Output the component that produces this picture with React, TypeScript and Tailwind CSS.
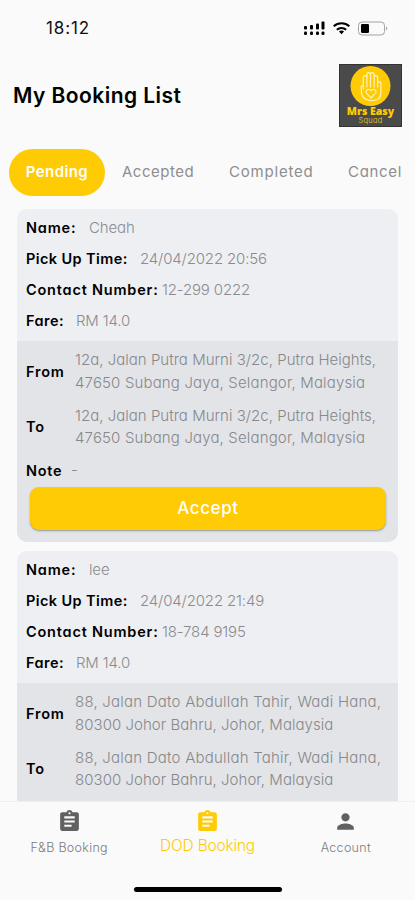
import React from "react";
import { MdAssignment, MdPerson } from "react-icons/md";

type Line = { text: string; style: string };

type Booking = {
  name: string;
  time: string;
  contact: string;
  fare: string;
  address: Line[];
  note?: string;
};

const tabs = [
  { title: "Accepted", style: "ml-[17px] w-[107px] tracking-[0.5px]" },
  { title: "Completed", style: "w-[119px] tracking-[0.8px]" },
  { title: "Cancel", style: "tracking-[0.7px]" },
];

const bookings: Booking[] = [
  {
    name: "Cheah",
    time: "24/04/2022 20:56",
    contact: "12-299 0222",
    fare: "RM 14.0",
    address: [
      { text: "12a, Jalan Putra Murni 3/2c, Putra Heights,", style: "tracking-[0.02px]" },
      { text: "47650 Subang Jaya, Selangor, Malaysia", style: "tracking-[0.15px]" },
    ],
    note: "-",
  },
  {
    name: "lee",
    time: "24/04/2022 21:49",
    contact: "18-784 9195",
    fare: "RM 14.0",
    address: [
      { text: "88, Jalan Dato Abdullah Tahir, Wadi Hana,", style: "tracking-[0.22px]" },
      { text: "80300 Johor Bahru, Johor, Malaysia", style: "tracking-[0.04px]" },
    ],
  },
];

const navItems = [
  { title: "F&B Booking", icon: MdAssignment, active: false },
  { title: "DOD Booking", icon: MdAssignment, active: true },
  { title: "Account", icon: MdPerson, active: false },
];

const StatusBar = () => (
  <div className="flex h-14 shrink-0 items-center justify-between pr-[27px] pl-[46px]">
    <span className="pt-0.5 text-[17px] tracking-[0.9px] text-[#111]">18:12</span>
    <svg width="85" height="18" viewBox="0 0 85 18" fill="none">
      <g fill="#000">
        <rect x="1" y="7" width="3" height="3.5" rx="1" />
        <rect x="7" y="6" width="3" height="4.5" rx="1" />
        <rect x="13" y="4.5" width="3" height="6" rx="1" />
        <rect x="18.5" y="2.5" width="3" height="8" rx="1" />
        <rect x="1" y="12.5" width="3" height="3.5" rx="1.2" />
        <rect x="7" y="12.5" width="3" height="3.5" rx="1.2" />
        <rect x="13" y="12.5" width="3" height="3.5" rx="1.2" />
        <rect x="18.5" y="12.5" width="3" height="3.5" rx="1.2" />
      </g>
      <g stroke="#000" strokeWidth="2">
        <path d="M30.7 7.3a11.5 11.5 0 0 1 15.6 0" />
        <path d="M33.8 10.7a7 7 0 0 1 9.4 0" />
      </g>
      <path d="M38.5 15.2l-2.5-2.6a3.7 3.7 0 0 1 5 0z" fill="#000" />
      <rect x="55.5" y="3" width="26" height="13" rx="3.5" stroke="#a3a3a3" />
      <rect x="58" y="5" width="8" height="9" rx="1.2" fill="#000" />
      <path d="M83 7.5v4c1.6-.6 1.6-3.4 0-4z" fill="#a3a3a3" />
    </svg>
  </div>
);

const Logo = () => (
  <div className="flex h-[63px] w-[63px] flex-col items-center border border-[#333] bg-[#4a4a4a] pt-px text-[#ffcb05]">
    <svg width="41" height="40" viewBox="0 0 41 40" fill="none" className="shrink-0">
      <circle cx="20.5" cy="20" r="20" fill="#ffcb05" />
      <g stroke="#fff3c0" strokeWidth="1.2" strokeLinecap="round" strokeLinejoin="round">
        <path d="M13.3 23V11.5a1.8 1.8 0 0 1 3.6 0V21V8.500a1.800 1.800 0 0 1 3.600 0V21V8.500a1.800 1.800 0 0 1 3.600 0V21v-9.500a1.800 1.800 0 0 1 3.600 0V21v-3.500a1.600 1.600 0 0 1 3.200 0V27c0 5-3.500 7.500-8.800 7.500s-9.500-2.500-10.500-6.500l-.5-7c0-1.800 2.200-1.800 2.200 0V23" />
        <path d="M21 32l-4.500-4.800c-1.800-2.800 2.200-5.400 4.500-2.600 2.300-2.800 6.300-.2 4.500 2.600z" />
      </g>
    </svg>
    <span className="font-['Open_Sans'] text-[10.5px] leading-[11px] font-extrabold whitespace-nowrap">Mrs Easy</span>
    <span className="text-[7.5px] leading-[8px] tracking-[0.2px] text-[#dcb52a]">Squad</span>
  </div>
);

const Row = ({ label, value, width }: { label: string; value: string; width: string }) => (
  <div className="flex h-[31px] items-center whitespace-nowrap">
    <span className={`shrink-0 text-[14.5px] font-semibold text-black ${width}`}>{label}</span>
    <span className="text-[15px] font-light tracking-[-0.15px] text-[#8c8c8f]">{value}</span>
  </div>
);

const Address = ({ label, lines }: { label: string; lines: Line[] }) => (
  <div className="flex h-[55.5px] items-center">
    <span className="w-[49px] shrink-0 text-[14.5px] font-semibold tracking-[0.8px] text-black">{label}</span>
    <div className="text-[15px] leading-[22.5px] font-light whitespace-nowrap text-[#88888b]">
      {lines.map((line) => (
        <p key={line.text} className={line.style}>
          {line.text}
        </p>
      ))}
    </div>
  </div>
);

const BookingCard = ({ booking }: { booking: Booking }) => (
  <div className="flex shrink-0 flex-col overflow-hidden rounded-[10px] bg-[#edeff3] last:grow last:rounded-b-none">
    <div className="h-[131.5px] px-[9px] pt-[3.5px]">
      <Row label="Name:" value={booking.name} width="w-[63px] tracking-[0.8px]" />
      <Row label="Pick Up Time:" value={booking.time} width="w-[114px] tracking-[0.4px]" />
      <Row label="Contact Number:" value={booking.contact} width="w-[136px] tracking-[0.8px]" />
      <Row label="Fare:" value={booking.fare} width="w-[50px] tracking-[0.5px]" />
    </div>
    <div className="grow bg-[#e2e4e8] px-[9px] pt-[3.5px]">
      <Address label="From" lines={booking.address} />
      <Address label="To" lines={booking.address} />
      {booking.note && (
        <>
          <Row label="Note" value={booking.note} width="w-[45px] tracking-[0.7px]" />
          <div className="px-1 pt-[0.5px] pb-3">
            <button className="h-[43px] w-[356px] rounded-[9px] bg-[#ffcb05] pt-0.5 text-[17px] font-medium tracking-[0.6px] text-white shadow-[0_1px_2px_rgba(0,0,0,0.35)]">
              Accept
            </button>
          </div>
        </>
      )}
    </div>
  </div>
);

const App = () => {
  return (
    <div className="flex h-[900px] w-[415px] flex-col overflow-hidden bg-[#fafafa] font-[Inter,sans-serif] [font-feature-settings:'cv11']">
      <StatusBar />
      <header className="flex h-[79px] shrink-0 items-center justify-between px-[13px]">
        <h1 className="text-[21px] font-semibold tracking-[0.45px] text-black">My Booking List</h1>
        <Logo />
      </header>
      <div className="flex h-[74px] shrink-0 items-center overflow-hidden pl-[9px] text-[15px] text-[#8e8e8e]">
        <button className="flex h-[47px] w-24 shrink-0 items-center justify-center rounded-full bg-[#ffcb05] font-semibold tracking-[0.4px] text-white">
          Pending
        </button>
        {tabs.map((tab) => (
          <button key={tab.title} className={`shrink-0 text-left ${tab.style}`}>
            {tab.title}
          </button>
        ))}
      </div>
      <main className="flex min-h-0 flex-1 flex-col gap-[9.5px] overflow-hidden px-[17px]">
        {bookings.map((booking) => (
          <BookingCard key={booking.name} booking={booking} />
        ))}
      </main>
      <nav className="flex h-[99px] shrink-0 flex-col items-center justify-between border-t border-[#f0f0f0] pb-2">
        <div className="grid w-full grid-cols-3">
          {navItems.map((item) => (
            <div
              key={item.title}
              className={`flex flex-col items-center pt-[7px] font-light ${item.active ? "text-[#ffcb05]" : "text-[#616161]"}`}
            >
              {React.createElement(item.icon, { size: 25 })}
              <span
                className={
                  item.active
                    ? "text-[15.5px] leading-6 tracking-[-0.2px]"
                    : "mt-0.5 text-[12.5px] leading-6 tracking-[0.3px] text-[#7a7a7a]"
                }
              >
                {item.title}
              </span>
            </div>
          ))}
        </div>
        <div className="h-[5px] w-[148px] rounded-full bg-black" />
      </nav>
    </div>
  );
};

export default App;
